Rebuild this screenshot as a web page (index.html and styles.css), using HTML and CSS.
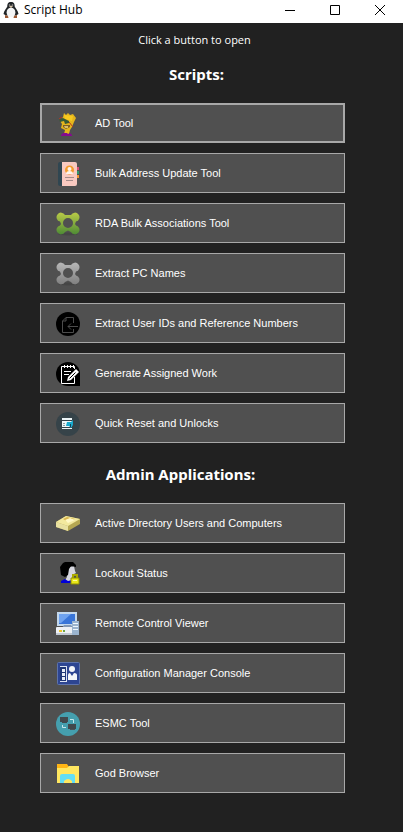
FILE: index.html
```html
<!DOCTYPE html>
<html lang="en">
<head>
<meta charset="utf-8">
<meta name="viewport" content="width=device-width">
<title>Script Hub</title>
<link rel="stylesheet" href="styles.css">
</head>
<body>
<header class="titlebar">
  <svg class="app-icon" viewBox="0 0 16 16" aria-hidden="true">
    <path d="M8 0C5 0 4.300 2 4.300 4.500C3.500 6.500 .8 8.500 .5 12L3 13.500H13L15.500 12C15.200 8.500 12.500 6.500 11.700 4.500C11.700 2 11 0 8 0Z" fill="#202427"/>
    <ellipse cx="8" cy="10.500" rx="4.400" ry="4.800" fill="#f4f5f6"/>
    <circle cx="6.500" cy="3" r=".8" fill="#aaa"/><circle cx="9.500" cy="3" r=".8" fill="#aaa"/>
    <path d="M6 4.500L8 3.500L10 4.500L8 6Z" fill="#d6c3a9"/>
    <path d="M2 13L5 14L5.500 16H2ZM14 13L11 14L10.500 16H14Z" fill="#9c5934"/>
  </svg>
  <span class="app-name">Script Hub</span>
  <div class="window-controls">
    <button class="control" aria-label="Minimize"><svg viewBox="0 0 10 10"><path d="M0 5.500H10"/></svg></button>
    <button class="control" aria-label="Maximize"><svg viewBox="0 0 10 10"><path d="M.5 .5H9.500V9.500H.5Z"/></svg></button>
    <button class="control" aria-label="Close"><svg viewBox="0 0 10 10"><path d="M0 0L10 10M10 0L0 10"/></svg></button>
  </div>
</header>
<main class="content">
  <p class="hint">Click a button to open</p>
  <section class="group">
    <h2 class="heading heading-scripts">Scripts:</h2>
    <button class="tool focused">
      <svg viewBox="0 0 24 24" aria-hidden="true">
        <path d="M8 1L10 3L12 1L14 3L17 2L20 6L18 10L16 15L14 18L13 22H8L9 18L5 16L6 12L4 9L7 5Z" fill="#e5b51c"/>
        <path d="M8 3L17 4L16 9L9 7Z" fill="#f7ca20"/>
        <path d="M3 7L7 6L13 9V11L9 12L8 9L4 10Z" fill="#385b37"/>
        <path d="M3 7L6 5M13 10L17 15" fill="none" stroke="#b23625"/>
        <path d="M7 13H14V15L10 17L7 15Z" fill="#816024"/><path d="M8 14H12V16H9Z" fill="#d8bd69"/>
        <path d="M5 23L7 21H11L12 22L14 21L16 23V24H5Z" fill="#850b8d"/>
      </svg><span>AD Tool</span></button>
    <button class="tool">
      <svg viewBox="0 0 24 24" aria-hidden="true">
        <path d="M20 5H23V8H20Z" fill="#dc4e76"/><path d="M20 9H23V12H20Z" fill="#2f9a6b"/><path d="M20 13H23V16H20Z" fill="#f39834"/>
        <rect x="2" y="0" width="19" height="24" rx="2" fill="#304651"/><path d="M6 0H19Q21 0 21 2V22Q21 24 19 24H6Z" fill="#f9c9c0"/>
        <circle cx="13.500" cy="8" r="4.500" fill="#f49b2d"/><circle cx="13.500" cy="7" r="2" fill="#fff4ec"/><path d="M10 12Q10 9 13.500 9T17 12Z" fill="#fff4ec"/>
        <path d="M9 15.500H18M10 18.500H17" stroke="#a58b88"/>
      </svg><span>Bulk Address Update Tool</span></button>
    <button class="tool">
      <svg viewBox="0 0 24 24" aria-hidden="true">
        <defs><linearGradient id="green" x2="0" y2="1"><stop stop-color="#b9ca47"/><stop offset="1" stop-color="#4e8b35"/></linearGradient></defs>
        <ellipse cx="12" cy="22" rx="10" ry="1.500" fill="#464646"/>
        <path fill="url(#green)" fill-rule="evenodd" d="M9 3H15A4.500 4.500 0 1 1 20 9.500L19 12L20 13.500A4.500 4.500 0 1 1 15 20L12 18.500L9 20A4.500 4.500 0 1 1 4 13.500L5 12L4 9.500A4.500 4.500 0 1 1 9 3ZM12 6A5 5 0 1 0 12 16A5 5 0 1 0 12 6Z"/>
      </svg><span>RDA Bulk Associations Tool</span></button>
    <button class="tool">
      <svg viewBox="0 0 24 24" aria-hidden="true">
        <defs><linearGradient id="gray" x2="0" y2="1"><stop stop-color="#b7b7b7"/><stop offset="1" stop-color="#808080"/></linearGradient></defs>
        <ellipse cx="12" cy="22" rx="10" ry="1.500" fill="#464646"/>
        <path fill="url(#gray)" fill-rule="evenodd" d="M9 3H15A4.500 4.500 0 1 1 20 9.500L19 12L20 13.500A4.500 4.500 0 1 1 15 20L12 18.500L9 20A4.500 4.500 0 1 1 4 13.500L5 12L4 9.500A4.500 4.500 0 1 1 9 3ZM12 6A5 5 0 1 0 12 16A5 5 0 1 0 12 6Z"/>
      </svg><span>Extract PC Names</span></button>
    <button class="tool">
      <svg viewBox="0 0 24 24" aria-hidden="true">
        <circle cx="12" cy="12" r="12" fill="#000"/><path d="M17.500 11V5.500H10L6.500 9V20.500H17.500V17M10 5.500V9H6.500M22 14.500H12M15 11.500L12 14.500L15 17.500" fill="none" stroke="#4c4c4c"/>
      </svg><span>Extract User IDs and Reference Numbers</span></button>
    <button class="tool">
      <svg viewBox="0 0 24 24" aria-hidden="true">
        <path d="M12 0A12 12 0 0 0 12 24H24V12A12 12 0 0 0 12 0Z" fill="#000"/><path d="M18.500 15V21.500H5.500V4.500H18.500V7M8.500 3V6M11.500 3V6M14.500 3V6M17.500 3V6M8 9.500H15M8 12.500H13" fill="none" stroke="#fff"/><path d="M12 15L20 7L23 10L15 18L11 19Z" fill="#fff"/><path d="M13.500 16.500L19.500 10.500" stroke="#000"/>
      </svg><span>Generate Assigned Work</span></button>
    <button class="tool">
      <svg viewBox="0 0 24 24" aria-hidden="true">
        <circle cx="12" cy="12" r="12" fill="#364349"/><path d="M6 6H16V17H6Z" fill="#edf5f7"/><path d="M6 8.500H16M6 15.500H16" stroke="#334047"/><path d="M7 11.500H9M7 13.500H9" stroke="#89999f"/><path d="M11 10H15L17 8V13L15 16L13 14H10Z" fill="#17aace"/><path d="M14.500 12V15" stroke="#17455b"/>
      </svg><span>Quick Reset and Unlocks</span></button>
  </section>
  <section class="group">
    <h2 class="heading heading-admin">Admin Applications:</h2>
    <button class="tool">
      <svg viewBox="0 0 24 24" aria-hidden="true">
        <path d="M0 10L10 4L24 7V12L12 19L0 15Z" fill="#b5a752"/><path d="M0 10L10 4L24 7L12 14Z" fill="#f3e99f"/><path d="M0 10L12 14V19L0 15Z" fill="#e8e0a0"/><path d="M7 7L11 5L19 7L12 10Z" fill="#d9b44b"/><path d="M9 8L14 6L19 8L12 11Z" fill="#fff8c6"/>
      </svg><span>Active Directory Users and Computers</span></button>
    <button class="tool">
      <svg viewBox="0 0 24 24" aria-hidden="true">
        <path d="M11 6L18 4L19 9L20 11L18 12L17 15L15 17L18 20H8L11 15Z" fill="#d6d7df"/><path d="M7 1L9 0H17L20 3V5L15 4L13 7L12 13L9 15L5 13L4 5Z" fill="#000"/><path d="M5 19L9 17L12 19L16 18V21H5Z" fill="#0000d8"/><path d="M17 16V13H21V16" fill="none" stroke="#aaa900" stroke-width="2"/><path d="M15 16H23V22H15Z" fill="#e8e719" stroke="#929000"/><path d="M17 18.500H21" stroke="#fffc9b"/>
      </svg><span>Lockout Status</span></button>
    <button class="tool">
      <svg viewBox="0 0 24 24" aria-hidden="true">
        <path d="M1 0H21V14H1Z" fill="#c3d8ed"/><path d="M3 2H19V12H3Z" fill="#3975d8"/><path d="M3 2H15L5 11H3Z" fill="#6fa3ef"/><path d="M8 13H15L17 16H6Z" fill="#8499b6"/><rect y="15" width="20" height="8" rx="1" fill="#eef1f5"/><path d="M0 21H20V23H0Z" fill="#c1c8d1"/><path d="M3 18H6V20H3Z" fill="#efc42b"/><path d="M7 18H9V20H7Z" fill="#70a945"/><path d="M16 9H23V23H16Z" fill="#9bb4ce"/><path d="M17 11.500H22M17 14.500H22M17 17.500H22" stroke="#eef8ff"/>
      </svg><span>Remote Control Viewer</span></button>
    <button class="tool">
      <svg viewBox="0 0 24 24" aria-hidden="true">
        <rect x="1.500" y=".5" width="22" height="22" rx="1" fill="#2d4592" stroke="#5d73ac"/><path d="M4 4H11V20H4Z" fill="#203777"/><path d="M4 4.500H11M4 19.500H11M10.500 4V20" stroke="#dce3f2"/><path d="M6 7H9V10H6ZM6 11H9V14H6ZM6 15H9V18H6Z" fill="#e9eef8"/><circle cx="16" cy="7" r="3" fill="#f3f5fa"/><path d="M12 18V13Q12 11 14 11L16 14L18 11Q21 11 21 13V18Z" fill="#f4f6fa"/>
      </svg><span>Configuration Manager Console</span></button>
    <button class="tool">
      <svg viewBox="0 0 24 24" aria-hidden="true">
        <circle cx="12" cy="12" r="12" fill="#459fae"/><path d="M4 5H12V10H4Z" fill="#42494d"/><path d="M6 10H11V11H6ZM12 12H20V17H12Z" fill="#41484c"/><path d="M14 17H19V18H14Z" fill="#485359"/><path d="M14 7.500H17.500V11M10 15.500H6.500V13" fill="none" stroke="#c5e7eb"/>
      </svg><span>ESMC Tool</span></button>
    <button class="tool">
      <svg viewBox="0 0 24 24" aria-hidden="true">
        <path d="M1 2H11L13 5H22V20H1Z" fill="#ffb514"/><path d="M1 6H11L13 4H23V21H1Z" fill="#ffe760"/><path d="M4 21V14Q4 12 6 12H17Q19 12 19 14V21H16V19Q12 15 8 19V21Z" fill="#61def6"/>
      </svg><span>God Browser</span></button>
  </section>
</main>
</body>
</html>
```
FILE: styles.css
```css
* { box-sizing: border-box; }
body {
  margin: 0;
  min-height: 100vh;
  background: #212121;
  color: #fff;
  font-family: "Liberation Sans", sans-serif;
  font-size: 11px;
}
button { font: inherit; }
.titlebar {
  display: flex;
  align-items: center;
  height: 23px;
  padding: 0 1px 3px 3px;
  background: #fff;
  color: #000;
}
.app-icon { width: 16px; height: 16px; margin-right: 5px; }
.app-name { font-family: "Open Sans", sans-serif; font-size: 12px; line-height: 16px; }
.window-controls { display: flex; margin-left: auto; }
.control {
  display: grid;
  place-items: center;
  width: 45px;
  height: 20px;
  padding: 0;
  border: 0;
  background: transparent;
}
.control svg { width: 10px; height: 10px; fill: none; stroke: #000; }
.content { padding: 9px 58px 38px 40px; }
.hint {
  margin: 0 0 15px;
  padding-left: 4px;
  font-family: "Open Sans", sans-serif;
  font-size: 11px;
  line-height: 16px;
  text-align: center;
}
.group {
  display: flex;
  flex-direction: column;
  gap: 10px;
  margin-bottom: 20px;
}
.heading {
  margin: 0 0 8px;
  font: bold 15px/22px "Noto Sans", sans-serif;
  text-align: center;
}
.heading-scripts { padding-left: 8px; }
.heading-admin { padding-right: 24px; }
.tool {
  display: flex;
  align-items: center;
  gap: 15px;
  height: 40px;
  padding: 0 15px;
  border: 1px solid #a8a8a8;
  border-radius: 0;
  background: #505050;
  color: #fff;
  text-align: left;
}
.focused { border-width: 2px; padding: 0 14px; }
.tool svg { flex: none; width: 24px; height: 24px; margin-top: 2px; }
```
